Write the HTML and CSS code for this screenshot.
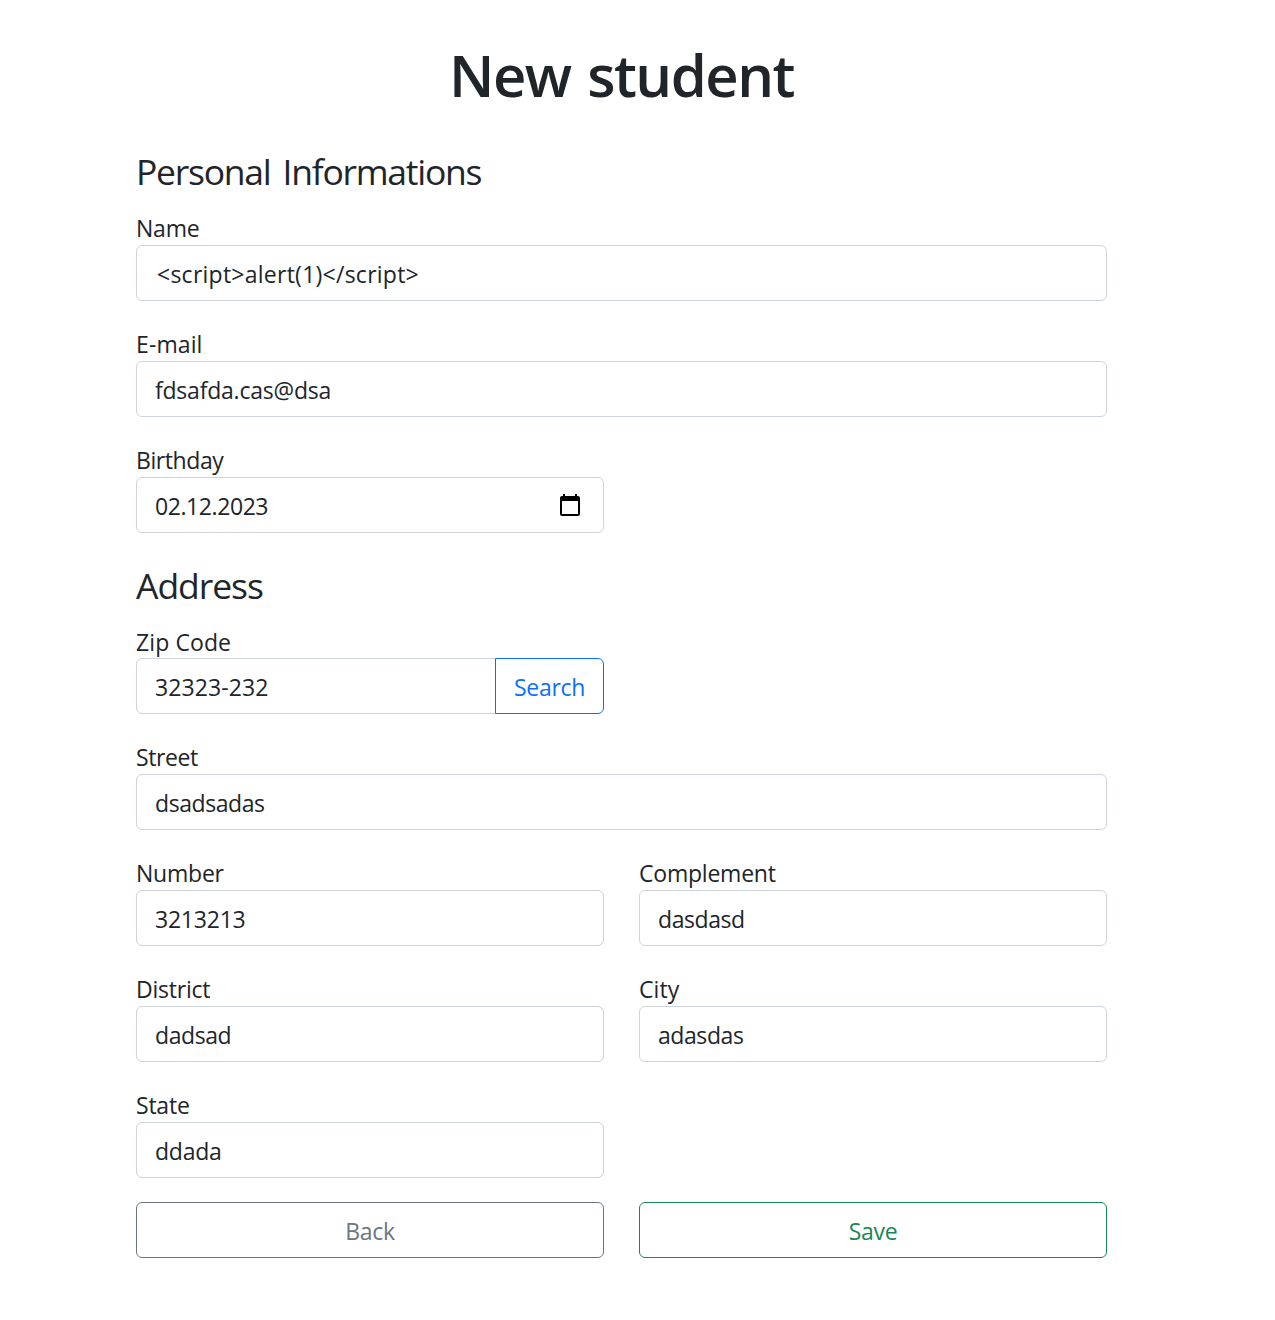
FILE: index.html
```html
<!DOCTYPE html>
<html lang="en">
<head>
<meta charset="utf-8">
<title>New student</title>
<link rel="stylesheet" href="styles.css">
</head>
<body>
<main class="page">
  <h1 class="title">New student</h1>
  <form class="form">
    <h2 class="section">Personal Informations</h2>
    <div class="field wide"><label class="label">Name</label><div class="control code">&lt;script&gt;alert(1)&lt;/script&gt;</div></div>
    <div class="field wide"><label class="label loose">E-mail</label><div class="control">fdsafda.cas@dsa</div></div>
    <div class="field"><label class="label tight">Birthday</label><div class="control date tight">02.12.2023
      <svg class="calendar" width="24" height="24" viewBox="0 0 24 24"><path d="M20 3h-1V1h-2v2H7V1H5v2H4c-1.100 0-2 .9-2 2v16c0 1.100.9 2 2 2h16c1.100 0 2-.9 2-2V5c0-1.100-.9-2-2-2zm0 18H4V8h16v13z"/></svg></div></div>
    <h2 class="section address">Address</h2>
    <div class="field zip"><label class="label loose">Zip Code</label><div class="group"><div class="control loose">32323-232</div><button type="button" class="button search">Search</button></div></div>
    <div class="field wide"><label class="label tight">Street</label><div class="control tight">dsadsadas</div></div>
    <div class="field"><label class="label">Number</label><div class="control">3213213</div></div>
    <div class="field"><label class="label">Complement</label><div class="control tight">dasdasd</div></div>
    <div class="field"><label class="label">District</label><div class="control tight">dadsad</div></div>
    <div class="field"><label class="label loose">City</label><div class="control tight">adasdas</div></div>
    <div class="field state"><label class="label">State</label><div class="control">ddada</div></div>
    <button type="button" class="button back">Back</button>
    <button type="button" class="button save">Save</button>
  </form>
</main>
</body>
</html>
```

FILE: styles.css
```css
* { box-sizing: border-box; }
body { margin: 0; background: #fff; color: #212529; font: 23px/36px "Open Sans", "Noto Sans", sans-serif; letter-spacing: -.22px; }
.page { width: 971px; margin-left: 136px; padding-top: 40px; }
.title { margin: 0; height: 70px; font-size: 58px; line-height: 70px; font-weight: 600; letter-spacing: -1.5px; word-spacing: 3px; text-align: center; }
.form { display: grid; grid-template-columns: 468px 468px; column-gap: 35px; }
.section { grid-column: 1 / -1; margin: 39px 0 18px; height: 44px; font-size: 35.5px; line-height: 44px; font-weight: 400; letter-spacing: -1.25px; word-spacing: 4px; }
.address { margin: 4px 0 17px; letter-spacing: -1.05px; }
.field { height: 116px; }
.wide { grid-column: 1 / -1; }
.label { display: block; height: 34px; line-height: 34px; }
.control { display: flex; align-items: center; height: 56px; padding: 1px 18px 0; border: 1px solid #ced4da; border-radius: 6px; }
.code { padding-left: 20px; letter-spacing: .25px; }
.tight { letter-spacing: -.42px; }
.loose { letter-spacing: .1px; }
.date { justify-content: space-between; padding-right: 21px; }
.calendar { display: block; margin-top: -1px; }
.group { display: flex; }
.group .control { width: 360px; border-radius: 6px 0 0 6px; }
.zip { grid-column: 1 / -1; width: 468px; }
.zip .label { line-height: 36px; }
.button { height: 56px; padding: 1px 0 0; background: #fff; border: 1px solid; border-radius: 6px; font: inherit; letter-spacing: -.3px; }
.search { width: 109px; margin-left: -1px; border-radius: 0 6px 6px 0; color: #0d6efd; }
.state { grid-column: 1 / -1; width: 468px; height: 114px; }
.back { color: #6c757d; }
.save { color: #198754; }
```
